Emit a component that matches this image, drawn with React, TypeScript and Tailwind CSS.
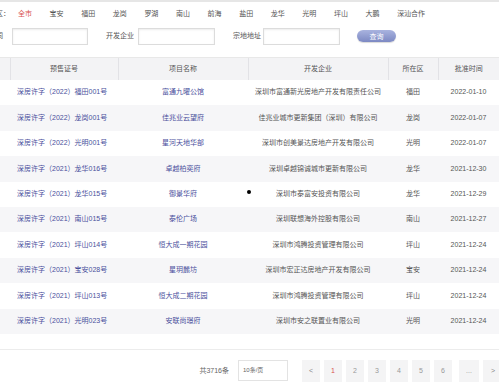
import React from 'react';

const districts = ['全市', '宝安', '福田', '龙岗', '罗湖', '南山', '前海', '盐田', '龙华', '光明', '坪山', '大鹏', '深汕合作'];

const rows = [
  ['深房许字（2022）福田001号', '富通九曜公馆', '深圳市富通新光房地产开发有限责任公司', '福田', '2022-01-10'],
  ['深房许字（2022）龙岗001号', '佳兆业云望府', '佳兆业城市更新集团（深圳）有限公司', '龙岗', '2022-01-07'],
  ['深房许字（2022）光明001号', '星河天地华部', '深圳市创美景达房地产开发有限公司', '光明', '2022-01-07'],
  ['深房许字（2021）龙华016号', '卓越柏奕府', '深圳卓越锦诚城市更新有限公司', '龙华', '2021-12-30'],
  ['深房许字（2021）龙华015号', '御景华府', '深圳市泰富安投资有限公司', '龙华', '2021-12-29'],
  ['深房许字（2021）南山015号', '泰伦广场', '深圳联想海外控股有限公司', '南山', '2021-12-27'],
  ['深房许字（2021）坪山014号', '恒大成一期花园', '深圳市鸿腾投资管理有限公司', '坪山', '2021-12-24'],
  ['深房许字（2021）宝安028号', '星玥麓坊', '深圳市宏正达房地产开发有限公司', '宝安', '2021-12-24'],
  ['深房许字（2021）坪山013号', '恒大成二期花园', '深圳市鸿腾投资管理有限公司', '坪山', '2021-12-24'],
  ['深房许字（2021）光明023号', '安联尚璟府', '深圳市安之联置业有限公司', '光明', '2021-12-24'],
];

export default function App() {
  return (
    <div
      className="relative w-[499px] h-[390px] overflow-hidden bg-white text-[7px] text-[#555] border-t-2 border-[#e6e6e6]"
      style={{ fontFamily: '"Liberation Sans", "Noto Sans CJK SC", sans-serif' }}
    >
      {/* district tabs */}
      <div className="flex items-center h-[25px] ml-[-4px]">
        <span className="w-[22px]">区：</span>
        <div className="flex gap-[17.6px]">
          {districts.map((d, i) => (
            <span key={d} className={i === 0 ? 'text-[#d9534f]' : 'text-[#555]'}>{d}</span>
          ))}
        </div>
      </div>

      {/* search row */}
      <div className="flex items-center h-[18px] ml-[-18px]">
        <span>关键词</span>
        <div className="w-[76px] h-[17px] ml-[9px] border border-[#dcdcdc] shadow-[inset_0_1px_2px_rgba(0,0,0,0.08)]" />
        <span className="ml-[18px]">开发企业</span>
        <div className="w-[77px] h-[17px] ml-[4px] border border-[#dcdcdc] shadow-[inset_0_1px_2px_rgba(0,0,0,0.08)]" />
        <span className="ml-[18px]">宗地地址</span>
        <div className="w-[77px] h-[17px] ml-[2px] border border-[#dcdcdc] shadow-[inset_0_1px_2px_rgba(0,0,0,0.08)]" />
        <button className="ml-[17px] w-[39px] h-[12px] rounded-full bg-gradient-to-b from-[#a9b3df] to-[#7d89c3] text-white text-[7px] leading-none shadow-[0_1px_1px_rgba(0,0,0,0.15)]">
          查询
        </button>
      </div>

      {/* table */}
      <div className="mt-[12px] border-t border-[#e8e8e8]">
        <table className="w-[499px] table-fixed border-collapse">
          <colgroup>
            <col className="w-[10px]" />
            <col className="w-[108px]" />
            <col className="w-[130px]" />
            <col className="w-[140px]" />
            <col className="w-[50px]" />
            <col className="w-[61px]" />
          </colgroup>
          <thead>
            <tr className="h-[22px] bg-[#f3f3f5] text-[#555]">
              <th className="font-normal border-r border-[#e2e2e6]" />
              <th className="font-normal border-r border-[#e2e2e6]">预售证号</th>
              <th className="font-normal border-r border-[#e2e2e6]">项目名称</th>
              <th className="font-normal border-r border-[#e2e2e6]">开发企业</th>
              <th className="font-normal border-r border-[#e2e2e6]">所在区</th>
              <th className="font-normal">批准时间</th>
            </tr>
          </thead>
          <tbody>
            {rows.map((r, i) => (
              <tr key={i} className={`h-[25.4px] ${i % 2 === 1 ? 'bg-[#f6f6f8]' : 'bg-white'}`}>
                <td />
                <td className="pl-[7px] text-[#4a4f9c] whitespace-nowrap">{r[0]}</td>
                <td className="text-center text-[#4a4f9c]">{r[1]}</td>
                <td className="text-center whitespace-nowrap">{r[2]}</td>
                <td className="text-center">{r[3]}</td>
                <td className="text-center">{r[4]}</td>
              </tr>
            ))}
          </tbody>
        </table>
      </div>

      {/* pagination */}
      <div className="mt-[15px] border-t border-[#ececec] pt-[10px] flex items-center justify-end">
        <span className="text-[#666]">共3716条</span>
        <div className="ml-[9px] w-[50px] h-[21px] border border-[#e3e3e3] flex items-center pl-[4px] text-[6px] text-[#666]">
          10条/页
        </div>
        <div className="ml-[14px] mr-[-4px] flex items-center gap-[4px] text-[#888]">
          <div className="w-[18px] h-[22px] bg-[#f4f4f5] flex items-center justify-center">&lt;</div>
          {['1', '2', '3', '4', '5', '6'].map((n) => (
            <div
              key={n}
              className={`w-[18px] h-[22px] bg-[#f4f4f5] flex items-center justify-center ${n === '1' ? 'text-[#d9534f]' : 'text-[#999]'}`}
            >
              {n}
            </div>
          ))}
          <div className="ml-[3px] w-[20px] h-[22px] bg-[#f4f4f5] flex items-center justify-center text-[#999]">...</div>
          <div className="w-[20px] h-[22px] bg-[#f4f4f5] flex items-center justify-center">&gt;</div>
        </div>
      </div>

      {/* cursor dot */}
      <div className="absolute left-[247px] top-[188px] w-[4px] h-[4px] rounded-full bg-black" />
    </div>
  );
}
